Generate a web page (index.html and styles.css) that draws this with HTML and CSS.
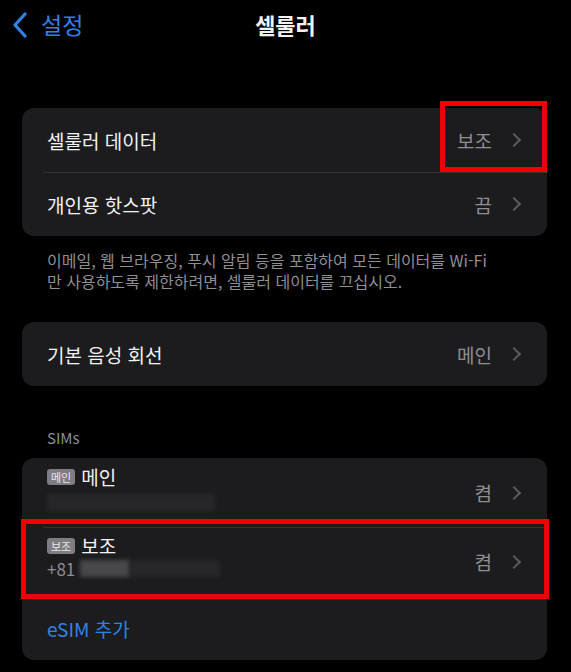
FILE: index.html
```html
<!DOCTYPE html>
<html lang="ko">
<head>
    <meta charset="utf-8">
    <title>셀룰러</title>
    <link rel="stylesheet" href="styles.css">
</head>
<body>
    <div class="nav">
        <a class="back" href="#">
            <svg width="18" height="26" viewBox="0 0 18 26"><path d="M14 2 L4 13 L14 24" fill="none" stroke="#2f83e6" stroke-width="3.2" stroke-linecap="round" stroke-linejoin="round"/></svg>
            <span>설정</span>
        </a>
        <div class="title">셀룰러</div>
    </div>

    <div class="group first">
        <div class="row">
            <span class="label">셀룰러 데이터</span>
            <span class="value">보조</span>
            <span class="chev"></span>
        </div>
        <div class="row">
            <span class="label">개인용 핫스팟</span>
            <span class="value">끔</span>
            <span class="chev"></span>
        </div>
        <div class="mark mark-data"></div>
    </div>
    <p class="note">이메일, 웹 브라우징, 푸시 알림 등을 포함하여 모든 데이터를 Wi-Fi<br>만 사용하도록 제한하려면, 셀룰러 데이터를 끄십시오.</p>

    <div class="group voice">
        <div class="row">
            <span class="label">기본 음성 회선</span>
            <span class="value">메인</span>
            <span class="chev"></span>
        </div>
    </div>

    <div class="section-title">SIMs</div>
    <div class="group sims">
        <div class="row sim">
            <div class="sim-info">
                <div class="sim-name"><span class="badge">메인</span>메인</div>
                <div class="sim-number"><span class="blur blur-dark wide"></span></div>
            </div>
            <span class="value">켬</span>
            <span class="chev"></span>
        </div>
        <div class="row sim">
            <div class="sim-info">
                <div class="sim-name"><span class="badge">보조</span>보조</div>
                <div class="sim-number">+81<span class="blur blur-light"></span><span class="blur blur-dark"></span></div>
            </div>
            <span class="value">켬</span>
            <span class="chev"></span>
        </div>
        <div class="row">
            <span class="label link">eSIM 추가</span>
        </div>
        <div class="mark mark-sim"></div>
    </div>
</body>
</html>
```

FILE: styles.css
```css
body {
    margin: 0;
    background-color: #000;
    color: #f2f2f2;
    font-family: "Noto Sans CJK KR", "Noto Sans", sans-serif;
    width: 571px;
    height: 672px;
    overflow: hidden;
}

/* top bar */
.nav {
    position: relative;
    height: 50px;
    display: flex;
    align-items: center;
    justify-content: center;
}

.back {
    position: absolute;
    left: 11px;
    top: 12px;
    display: flex;
    align-items: center;
    gap: 12px;
    color: #2f83e6;
    text-decoration: none;
    font-size: 23px;
}

.back span {
    line-height: 26px;
    margin-top: -2px;
}

.title {
    font-size: 22px;
    font-weight: 600;
    margin-top: -2px;
}

/* grouped lists */
.group {
    position: relative;
    margin: 0 24px 0 22px;
    background-color: #1c1c1e;
    border-radius: 12px;
}

.first {
    margin-top: 58px;
}

.voice {
    margin-top: 30px;
}

.row {
    display: flex;
    align-items: center;
    height: 64px;
    padding: 0 26px 0 25px;
    position: relative;
}

.row + .row::before {
    content: "";
    position: absolute;
    left: 21px;
    right: 0;
    top: 0;
    border-top: 1px solid #323234;
}

.label {
    flex: 1;
    font-size: 19px;
}

.value {
    font-size: 19px;
    color: #8e8e93;
    margin-left: auto;
}

.chev {
    width: 8px;
    height: 8px;
    border-top: 2px solid #5c5c60;
    border-right: 2px solid #5c5c60;
    transform: rotate(45deg);
    margin-left: 17px;
    margin-right: 2px;
}

.note {
    margin: 14px 24px 0 47px;
    font-size: 16px;
    line-height: 21px;
    color: #8e8e93;
}

.section-title {
    margin: 42px 0 0 47px;
    font-size: 15px;
    color: #8e8e93;
    line-height: 20px;
}

.sims {
    margin-top: 10px;
}

.sim {
    height: 69px;
}

.sim-info {
    flex: 1;
}

.sim-name {
    display: flex;
    align-items: center;
    font-size: 19px;
    line-height: 24px;
    margin-top: -10px;
}

.badge {
    display: inline-block;
    background-color: #7d7d82;
    color: #e8e8ea;
    font-size: 11px;
    line-height: 16px;
    padding: 0 4px;
    border-radius: 3px;
    margin-right: 6px;
}

.sim-number {
    display: flex;
    align-items: center;
    font-size: 17px;
    line-height: 22px;
    height: 22px;
    color: #8e8e93;
}

.blur {
    display: inline-block;
    height: 17px;
    filter: blur(2px);
}

.blur-light {
    width: 50px;
    margin-left: 5px;
    background-color: #48484b;
}

.blur-dark {
    width: 90px;
    background-color: #27272a;
}

.wide {
    width: 168px;
    margin-top: 6px;
}

.link {
    color: #2f83e6;
}

/* red annotation boxes */
.mark {
    position: absolute;
    border: 5px solid #f00006;
    box-sizing: border-box;
}

.mark-data {
    left: 418px;
    top: -7px;
    width: 107px;
    height: 71px;
}

.mark-sim {
    left: -1px;
    top: 61px;
    width: 528px;
    height: 80px;
}
```
